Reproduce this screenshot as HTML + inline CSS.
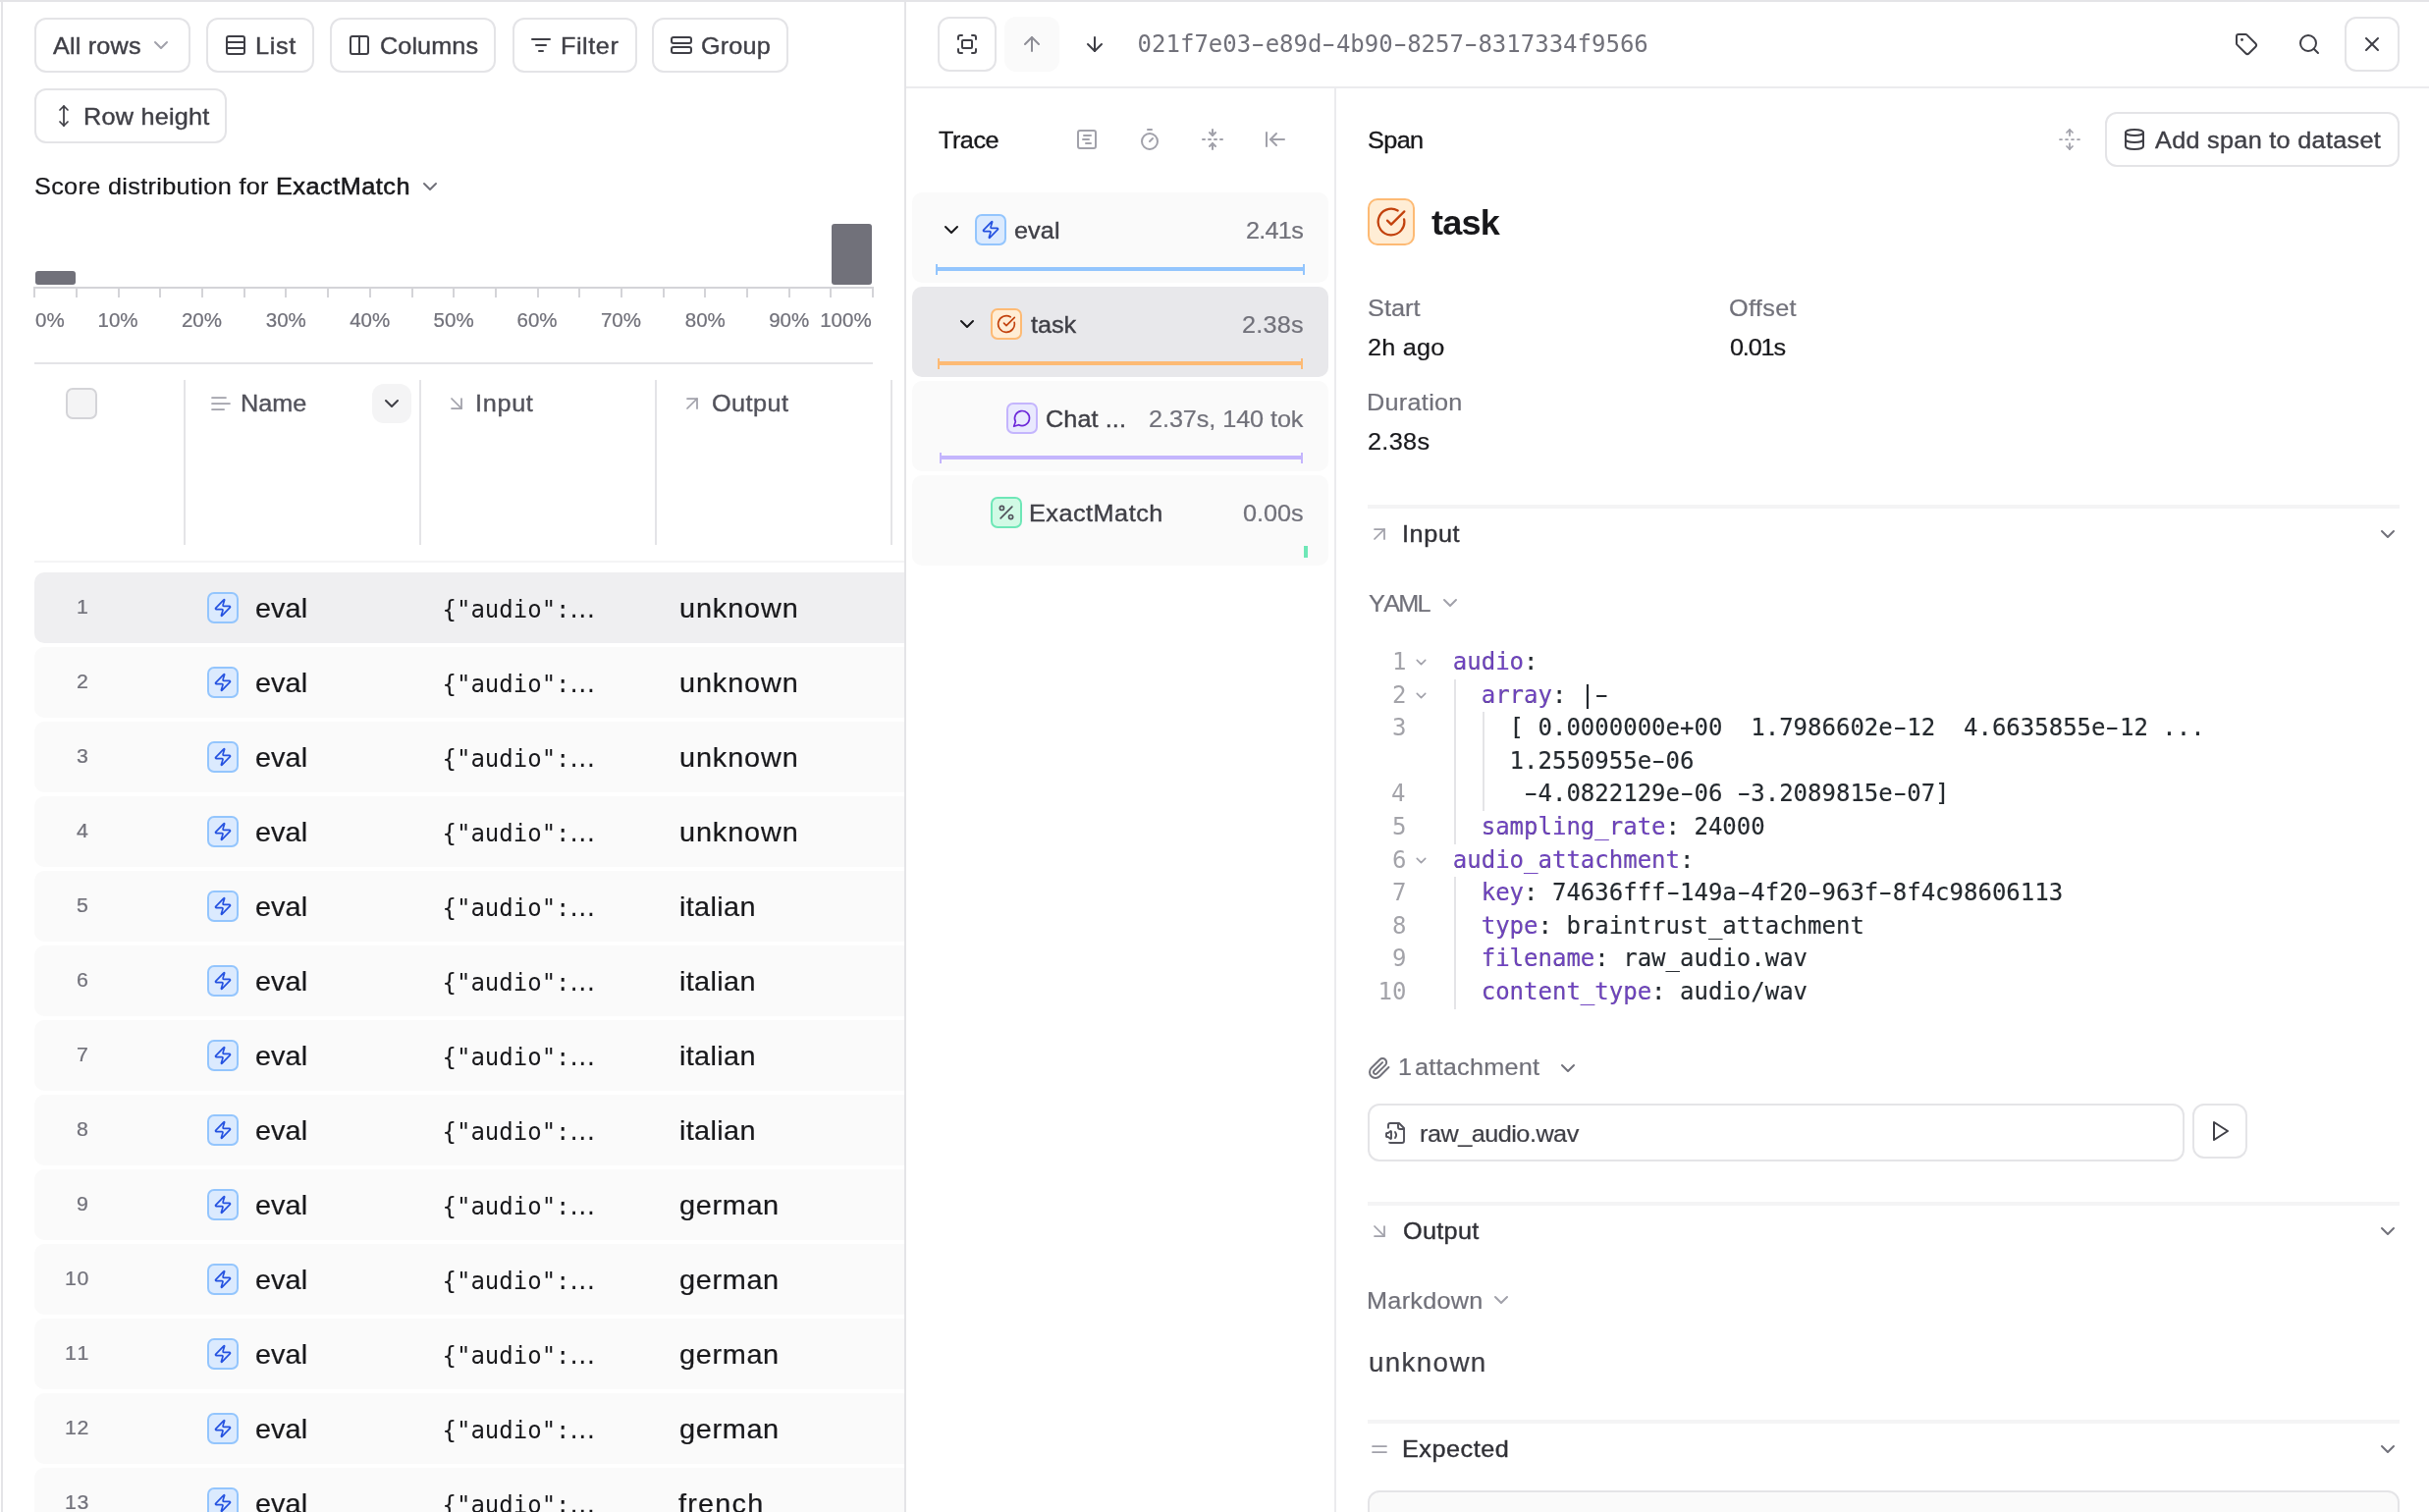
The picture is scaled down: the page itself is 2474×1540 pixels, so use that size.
<!DOCTYPE html>
<html lang="en"><head><meta charset="utf-8"><title>Experiment trace view</title>
<style>
html,body{margin:0;padding:0;background:#fff}
body{width:2474px;height:1540px;position:relative;overflow:hidden;font-family:"Liberation Sans",sans-serif}
#root{will-change:transform;position:absolute;left:0;top:0;width:2474px;height:1540px;overflow:hidden;background:#fff}
#root>div,#root>svg{position:absolute;box-sizing:border-box}
.t{white-space:pre;font-kerning:normal;transform-origin:0 0}
.hy{display:inline-block;transform:scaleX(1.65)}
</style></head>
<body><div id="root">
<div style="left:0px;top:0px;width:2474px;height:2px;background:#e4e4e7"></div>
<div style="left:1px;top:2px;width:2px;height:1540px;background:#e4e4e7"></div>
<div style="left:921px;top:2px;width:2px;height:1540px;background:#e4e4e7"></div>
<div style="left:923px;top:88px;width:1551px;height:2px;background:#ebebee"></div>
<div style="left:1359px;top:90px;width:2px;height:1540px;background:#ebebee"></div>
<div style="left:35px;top:18px;width:159px;height:56px;border:2px solid #e4e4e7;border-radius:12px;background:#fff;"></div>
<div class="t" style="left:54.20px;top:31.00px;line-height:32px;font-family:'Liberation Sans', sans-serif;font-size:24.5px;font-weight:400;color:#3f3f46;letter-spacing:0.170px;-webkit-text-stroke:0.39px #3f3f46;transform:scaleX(1.03);">All rows</div>
<svg style="left:152.0px;top:34.0px;" width="24" height="24" viewBox="0 0 24 24" fill="none" stroke="#a1a1aa" stroke-width="2" stroke-linecap="round" stroke-linejoin="round" color="#a1a1aa"><path d="m6 9 6 6 6-6"/></svg>
<div style="left:210px;top:18px;width:110px;height:56px;border:2px solid #e4e4e7;border-radius:12px;background:#fff;"></div>
<svg style="left:228.0px;top:34.0px;" width="24" height="24" viewBox="0 0 24 24" fill="none" stroke="#3f3f46" stroke-width="2" stroke-linecap="round" stroke-linejoin="round" color="#3f3f46"><rect x="3" y="3" width="18" height="18" rx="2"/><path d="M21 9H3"/><path d="M21 15H3"/></svg>
<div class="t" style="left:260.24px;top:31.00px;line-height:32px;font-family:'Liberation Sans', sans-serif;font-size:24.5px;font-weight:400;color:#3f3f46;letter-spacing:0.612px;-webkit-text-stroke:0.39px #3f3f46;transform:scaleX(1.03);">List</div>
<div style="left:336px;top:18px;width:169px;height:56px;border:2px solid #e4e4e7;border-radius:12px;background:#fff;"></div>
<svg style="left:354.0px;top:34.0px;" width="24" height="24" viewBox="0 0 24 24" fill="none" stroke="#3f3f46" stroke-width="2" stroke-linecap="round" stroke-linejoin="round" color="#3f3f46"><rect x="3" y="3" width="18" height="18" rx="2"/><path d="M12 3v18"/></svg>
<div class="t" style="left:386.57px;top:31.00px;line-height:32px;font-family:'Liberation Sans', sans-serif;font-size:24.5px;font-weight:400;color:#3f3f46;letter-spacing:0.083px;-webkit-text-stroke:0.39px #3f3f46;transform:scaleX(1.03);">Columns</div>
<div style="left:522px;top:18px;width:127px;height:56px;border:2px solid #e4e4e7;border-radius:12px;background:#fff;"></div>
<svg style="left:539.0px;top:34.0px;" width="24" height="24" viewBox="0 0 24 24" fill="none" stroke="#3f3f46" stroke-width="2" stroke-linecap="round" stroke-linejoin="round" color="#3f3f46"><path d="M3 6h18"/><path d="M7 12h10"/><path d="M10 18h4"/></svg>
<div class="t" style="left:571.34px;top:31.00px;line-height:32px;font-family:'Liberation Sans', sans-serif;font-size:24.5px;font-weight:400;color:#3f3f46;letter-spacing:0.533px;-webkit-text-stroke:0.39px #3f3f46;transform:scaleX(1.03);">Filter</div>
<div style="left:664px;top:18px;width:138.5px;height:56px;border:2px solid #e4e4e7;border-radius:12px;background:#fff;"></div>
<svg style="left:682.0px;top:34.0px;" width="24" height="24" viewBox="0 0 24 24" fill="none" stroke="#3f3f46" stroke-width="2" stroke-linecap="round" stroke-linejoin="round" color="#3f3f46"><rect x="2" y="4" width="20" height="6" rx="2"/><rect x="2" y="14" width="20" height="6" rx="2"/></svg>
<div class="t" style="left:714.37px;top:31.00px;line-height:32px;font-family:'Liberation Sans', sans-serif;font-size:24.5px;font-weight:400;color:#3f3f46;letter-spacing:0.131px;-webkit-text-stroke:0.39px #3f3f46;transform:scaleX(1.03);">Group</div>
<div style="left:35px;top:90px;width:196px;height:56px;border:2px solid #e4e4e7;border-radius:12px;background:#fff;"></div>
<svg style="left:53.0px;top:106.0px;" width="24" height="24" viewBox="0 0 24 24" fill="none" stroke="#3f3f46" stroke-width="1.75" stroke-linecap="round" stroke-linejoin="round" color="#3f3f46"><path d="M12 2v20"/><path d="m8 18 4 4 4-4"/><path d="m8 6 4-4 4 4"/></svg>
<div class="t" style="left:84.54px;top:103.00px;line-height:32px;font-family:'Liberation Sans', sans-serif;font-size:24.5px;font-weight:400;color:#3f3f46;letter-spacing:0.217px;-webkit-text-stroke:0.39px #3f3f46;transform:scaleX(1.03);">Row height</div>
<div class="t" style="left:34.77px;top:173.80px;line-height:32px;font-family:'Liberation Sans', sans-serif;font-size:24.5px;font-weight:400;color:#18181b;letter-spacing:0.327px;-webkit-text-stroke:0.22px #18181b;transform:scaleX(1.03);">Score distribution for</div>
<div class="t" style="left:281.34px;top:173.80px;line-height:32px;font-family:'Liberation Sans', sans-serif;font-size:24.5px;font-weight:400;color:#18181b;letter-spacing:0.504px;-webkit-text-stroke:0.55px #18181b;transform:scaleX(1.03);">ExactMatch</div>
<svg style="left:426.0px;top:177.5px;" width="24" height="24" viewBox="0 0 24 24" fill="none" stroke="#71717a" stroke-width="2" stroke-linecap="round" stroke-linejoin="round" color="#71717a"><path d="m6 9 6 6 6-6"/></svg>
<div style="left:36px;top:276px;width:41px;height:14px;background:#71717a;border-radius:3px"></div>
<div style="left:847px;top:228px;width:41px;height:62px;background:#71717a;border-radius:3px"></div>
<div style="left:34.3px;top:292px;width:855.7px;height:2px;background:#d4d4d8"></div>
<div style="left:34.3px;top:293px;width:2px;height:10px;background:#d4d4d8"></div>
<div style="left:76.99px;top:293px;width:2px;height:10px;background:#d4d4d8"></div>
<div style="left:119.68px;top:293px;width:2px;height:10px;background:#d4d4d8"></div>
<div style="left:162.37px;top:293px;width:2px;height:10px;background:#d4d4d8"></div>
<div style="left:205.06px;top:293px;width:2px;height:10px;background:#d4d4d8"></div>
<div style="left:247.75px;top:293px;width:2px;height:10px;background:#d4d4d8"></div>
<div style="left:290.44px;top:293px;width:2px;height:10px;background:#d4d4d8"></div>
<div style="left:333.13px;top:293px;width:2px;height:10px;background:#d4d4d8"></div>
<div style="left:375.82px;top:293px;width:2px;height:10px;background:#d4d4d8"></div>
<div style="left:418.51px;top:293px;width:2px;height:10px;background:#d4d4d8"></div>
<div style="left:461.2px;top:293px;width:2px;height:10px;background:#d4d4d8"></div>
<div style="left:503.89px;top:293px;width:2px;height:10px;background:#d4d4d8"></div>
<div style="left:546.58px;top:293px;width:2px;height:10px;background:#d4d4d8"></div>
<div style="left:589.27px;top:293px;width:2px;height:10px;background:#d4d4d8"></div>
<div style="left:631.96px;top:293px;width:2px;height:10px;background:#d4d4d8"></div>
<div style="left:674.65px;top:293px;width:2px;height:10px;background:#d4d4d8"></div>
<div style="left:717.34px;top:293px;width:2px;height:10px;background:#d4d4d8"></div>
<div style="left:760.03px;top:293px;width:2px;height:10px;background:#d4d4d8"></div>
<div style="left:802.72px;top:293px;width:2px;height:10px;background:#d4d4d8"></div>
<div style="left:845.41px;top:293px;width:2px;height:10px;background:#d4d4d8"></div>
<div style="left:888.1px;top:293px;width:2px;height:10px;background:#d4d4d8"></div>
<div class="t" style="left:36.00px;top:312.00px;line-height:27px;font-family:'Liberation Sans', sans-serif;font-size:20.5px;font-weight:400;color:#71717a;-webkit-text-stroke:0.22px #71717a;">0%</div>
<div class="t" style="left:99.50px;top:312.00px;line-height:27px;font-family:'Liberation Sans', sans-serif;font-size:20.5px;font-weight:400;color:#71717a;-webkit-text-stroke:0.22px #71717a;">10%</div>
<div class="t" style="left:184.90px;top:312.00px;line-height:27px;font-family:'Liberation Sans', sans-serif;font-size:20.5px;font-weight:400;color:#71717a;-webkit-text-stroke:0.22px #71717a;">20%</div>
<div class="t" style="left:270.80px;top:312.00px;line-height:27px;font-family:'Liberation Sans', sans-serif;font-size:20.5px;font-weight:400;color:#71717a;-webkit-text-stroke:0.22px #71717a;">30%</div>
<div class="t" style="left:356.20px;top:312.00px;line-height:27px;font-family:'Liberation Sans', sans-serif;font-size:20.5px;font-weight:400;color:#71717a;-webkit-text-stroke:0.22px #71717a;">40%</div>
<div class="t" style="left:441.60px;top:312.00px;line-height:27px;font-family:'Liberation Sans', sans-serif;font-size:20.5px;font-weight:400;color:#71717a;-webkit-text-stroke:0.22px #71717a;">50%</div>
<div class="t" style="left:526.50px;top:312.00px;line-height:27px;font-family:'Liberation Sans', sans-serif;font-size:20.5px;font-weight:400;color:#71717a;-webkit-text-stroke:0.22px #71717a;">60%</div>
<div class="t" style="left:611.90px;top:312.00px;line-height:27px;font-family:'Liberation Sans', sans-serif;font-size:20.5px;font-weight:400;color:#71717a;-webkit-text-stroke:0.22px #71717a;">70%</div>
<div class="t" style="left:697.80px;top:312.00px;line-height:27px;font-family:'Liberation Sans', sans-serif;font-size:20.5px;font-weight:400;color:#71717a;-webkit-text-stroke:0.22px #71717a;">80%</div>
<div class="t" style="left:783.20px;top:312.00px;line-height:27px;font-family:'Liberation Sans', sans-serif;font-size:20.5px;font-weight:400;color:#71717a;-webkit-text-stroke:0.22px #71717a;">90%</div>
<div class="t" style="left:835.20px;top:312.00px;line-height:27px;font-family:'Liberation Sans', sans-serif;font-size:20.5px;font-weight:400;color:#71717a;-webkit-text-stroke:0.22px #71717a;">100%</div>
<div style="left:35px;top:369px;width:854px;height:2px;background:#e4e4e7"></div>
<div style="left:187px;top:387px;width:2px;height:168px;background:#e4e4e7"></div>
<div style="left:427px;top:387px;width:2px;height:168px;background:#e4e4e7"></div>
<div style="left:667px;top:387px;width:2px;height:168px;background:#e4e4e7"></div>
<div style="left:907px;top:387px;width:2px;height:168px;background:#e4e4e7"></div>
<div style="left:67px;top:395px;width:32px;height:32px;border:2px solid #d4d4d8;border-radius:7px;background:#f4f4f5"></div>
<svg style="left:213.0px;top:399.0px;" width="24" height="24" viewBox="0 0 24 24" fill="none" stroke="#a1a1aa" stroke-width="1.75" stroke-linecap="round" stroke-linejoin="round" color="#a1a1aa"><path d="M17 6.1H3"/><path d="M21 12.1H3"/><path d="M15.1 18H3"/></svg>
<div class="t" style="left:245.04px;top:395.00px;line-height:32px;font-family:'Liberation Sans', sans-serif;font-size:24.5px;font-weight:400;color:#52525b;letter-spacing:-0.035px;-webkit-text-stroke:0.39px #52525b;transform:scaleX(1.03);">Name</div>
<div style="left:379px;top:391px;width:40px;height:40px;background:#f4f4f5;border-radius:12px"></div>
<svg style="left:387.0px;top:399.0px;" width="24" height="24" viewBox="0 0 24 24" fill="none" stroke="#3f3f46" stroke-width="2" stroke-linecap="round" stroke-linejoin="round" color="#3f3f46"><path d="m6 9 6 6 6-6"/></svg>
<svg style="left:453.0px;top:399.0px;" width="24" height="24" viewBox="0 0 24 24" fill="none" stroke="#a1a1aa" stroke-width="1.75" stroke-linecap="round" stroke-linejoin="round" color="#a1a1aa"><path d="m7 7 10 10"/><path d="M17 7v10H7"/></svg>
<div class="t" style="left:484.14px;top:395.00px;line-height:32px;font-family:'Liberation Sans', sans-serif;font-size:24.5px;font-weight:400;color:#52525b;letter-spacing:0.664px;-webkit-text-stroke:0.39px #52525b;transform:scaleX(1.03);">Input</div>
<svg style="left:693.0px;top:399.0px;" width="24" height="24" viewBox="0 0 24 24" fill="none" stroke="#a1a1aa" stroke-width="1.75" stroke-linecap="round" stroke-linejoin="round" color="#a1a1aa"><path d="M7 7h10v10"/><path d="M7 17 17 7"/></svg>
<div class="t" style="left:724.87px;top:395.00px;line-height:32px;font-family:'Liberation Sans', sans-serif;font-size:24.5px;font-weight:400;color:#52525b;letter-spacing:0.462px;-webkit-text-stroke:0.39px #52525b;transform:scaleX(1.03);">Output</div>
<div style="left:35px;top:571px;width:886px;height:2px;background:#f4f4f5"></div>
<div style="left:35px;top:583px;width:886px;height:72px;background:#efeff1;border-radius:10px 0 0 10px"></div>
<div class="t" style="left:78.16px;top:604.00px;line-height:27px;font-family:'Liberation Sans', sans-serif;font-size:20.5px;font-weight:400;color:#71717a;-webkit-text-stroke:0.22px #71717a;transform:scaleX(1.04);">1</div>
<div style="left:211px;top:603px;width:32px;height:32px;border:2px solid #93c5fd;border-radius:7px;background:#dbeafe"></div>
<svg style="left:217.0px;top:609.0px;" width="20" height="20" viewBox="0 0 24 24" fill="none" stroke="#2451e0" stroke-width="2" stroke-linecap="round" stroke-linejoin="round" color="#2451e0"><path d="M4 14a1 1 0 0 1-.78-1.63l9.9-10.2a.5.5 0 0 1 .86.46l-1.92 6.02A1 1 0 0 0 13 10h7a1 1 0 0 1 .78 1.63l-9.9 10.2a.5.5 0 0 1-.86-.46l1.92-6.02A1 1 0 0 0 11 14z"/></svg>
<div class="t" style="left:259.57px;top:602.00px;line-height:36px;font-family:'Liberation Sans', sans-serif;font-size:28.0px;font-weight:400;color:#18181b;letter-spacing:0.059px;-webkit-text-stroke:0.22px #18181b;transform:scaleX(1.03);">eval</div>
<div class="t" style="left:450.50px;top:606.00px;line-height:31px;font-family:'DejaVu Sans Mono', 'Liberation Mono', monospace;font-size:24px;font-weight:400;color:#18181b;">{&quot;audio&quot;:</div>
<div class="t" style="left:580.30px;top:603.00px;line-height:34px;font-family:'DejaVu Sans', 'Liberation Sans', sans-serif;font-size:26px;font-weight:400;color:#18181b;">…</div>
<div class="t" style="left:691.87px;top:602.00px;line-height:36px;font-family:'Liberation Sans', sans-serif;font-size:28.0px;font-weight:400;color:#18181b;letter-spacing:0.858px;-webkit-text-stroke:0.22px #18181b;transform:scaleX(1.03);">unknown</div>
<div style="left:35px;top:659px;width:886px;height:72px;background:#fafafa;border-radius:10px 0 0 10px"></div>
<div class="t" style="left:78.16px;top:680.00px;line-height:27px;font-family:'Liberation Sans', sans-serif;font-size:20.5px;font-weight:400;color:#71717a;-webkit-text-stroke:0.22px #71717a;transform:scaleX(1.04);">2</div>
<div style="left:211px;top:679px;width:32px;height:32px;border:2px solid #93c5fd;border-radius:7px;background:#dbeafe"></div>
<svg style="left:217.0px;top:685.0px;" width="20" height="20" viewBox="0 0 24 24" fill="none" stroke="#2451e0" stroke-width="2" stroke-linecap="round" stroke-linejoin="round" color="#2451e0"><path d="M4 14a1 1 0 0 1-.78-1.63l9.9-10.2a.5.5 0 0 1 .86.46l-1.92 6.02A1 1 0 0 0 13 10h7a1 1 0 0 1 .78 1.63l-9.9 10.2a.5.5 0 0 1-.86-.46l1.92-6.02A1 1 0 0 0 11 14z"/></svg>
<div class="t" style="left:259.57px;top:678.00px;line-height:36px;font-family:'Liberation Sans', sans-serif;font-size:28.0px;font-weight:400;color:#18181b;letter-spacing:0.059px;-webkit-text-stroke:0.22px #18181b;transform:scaleX(1.03);">eval</div>
<div class="t" style="left:450.50px;top:682.00px;line-height:31px;font-family:'DejaVu Sans Mono', 'Liberation Mono', monospace;font-size:24px;font-weight:400;color:#18181b;">{&quot;audio&quot;:</div>
<div class="t" style="left:580.30px;top:679.00px;line-height:34px;font-family:'DejaVu Sans', 'Liberation Sans', sans-serif;font-size:26px;font-weight:400;color:#18181b;">…</div>
<div class="t" style="left:691.87px;top:678.00px;line-height:36px;font-family:'Liberation Sans', sans-serif;font-size:28.0px;font-weight:400;color:#18181b;letter-spacing:0.858px;-webkit-text-stroke:0.22px #18181b;transform:scaleX(1.03);">unknown</div>
<div style="left:35px;top:735px;width:886px;height:72px;background:#fafafa;border-radius:10px 0 0 10px"></div>
<div class="t" style="left:78.16px;top:756.00px;line-height:27px;font-family:'Liberation Sans', sans-serif;font-size:20.5px;font-weight:400;color:#71717a;-webkit-text-stroke:0.22px #71717a;transform:scaleX(1.04);">3</div>
<div style="left:211px;top:755px;width:32px;height:32px;border:2px solid #93c5fd;border-radius:7px;background:#dbeafe"></div>
<svg style="left:217.0px;top:761.0px;" width="20" height="20" viewBox="0 0 24 24" fill="none" stroke="#2451e0" stroke-width="2" stroke-linecap="round" stroke-linejoin="round" color="#2451e0"><path d="M4 14a1 1 0 0 1-.78-1.63l9.9-10.2a.5.5 0 0 1 .86.46l-1.92 6.02A1 1 0 0 0 13 10h7a1 1 0 0 1 .78 1.63l-9.9 10.2a.5.5 0 0 1-.86-.46l1.92-6.02A1 1 0 0 0 11 14z"/></svg>
<div class="t" style="left:259.57px;top:754.00px;line-height:36px;font-family:'Liberation Sans', sans-serif;font-size:28.0px;font-weight:400;color:#18181b;letter-spacing:0.059px;-webkit-text-stroke:0.22px #18181b;transform:scaleX(1.03);">eval</div>
<div class="t" style="left:450.50px;top:758.00px;line-height:31px;font-family:'DejaVu Sans Mono', 'Liberation Mono', monospace;font-size:24px;font-weight:400;color:#18181b;">{&quot;audio&quot;:</div>
<div class="t" style="left:580.30px;top:755.00px;line-height:34px;font-family:'DejaVu Sans', 'Liberation Sans', sans-serif;font-size:26px;font-weight:400;color:#18181b;">…</div>
<div class="t" style="left:691.87px;top:754.00px;line-height:36px;font-family:'Liberation Sans', sans-serif;font-size:28.0px;font-weight:400;color:#18181b;letter-spacing:0.858px;-webkit-text-stroke:0.22px #18181b;transform:scaleX(1.03);">unknown</div>
<div style="left:35px;top:811px;width:886px;height:72px;background:#fafafa;border-radius:10px 0 0 10px"></div>
<div class="t" style="left:78.16px;top:832.00px;line-height:27px;font-family:'Liberation Sans', sans-serif;font-size:20.5px;font-weight:400;color:#71717a;-webkit-text-stroke:0.22px #71717a;transform:scaleX(1.04);">4</div>
<div style="left:211px;top:831px;width:32px;height:32px;border:2px solid #93c5fd;border-radius:7px;background:#dbeafe"></div>
<svg style="left:217.0px;top:837.0px;" width="20" height="20" viewBox="0 0 24 24" fill="none" stroke="#2451e0" stroke-width="2" stroke-linecap="round" stroke-linejoin="round" color="#2451e0"><path d="M4 14a1 1 0 0 1-.78-1.63l9.9-10.2a.5.5 0 0 1 .86.46l-1.92 6.02A1 1 0 0 0 13 10h7a1 1 0 0 1 .78 1.63l-9.9 10.2a.5.5 0 0 1-.86-.46l1.92-6.02A1 1 0 0 0 11 14z"/></svg>
<div class="t" style="left:259.57px;top:830.00px;line-height:36px;font-family:'Liberation Sans', sans-serif;font-size:28.0px;font-weight:400;color:#18181b;letter-spacing:0.059px;-webkit-text-stroke:0.22px #18181b;transform:scaleX(1.03);">eval</div>
<div class="t" style="left:450.50px;top:834.00px;line-height:31px;font-family:'DejaVu Sans Mono', 'Liberation Mono', monospace;font-size:24px;font-weight:400;color:#18181b;">{&quot;audio&quot;:</div>
<div class="t" style="left:580.30px;top:831.00px;line-height:34px;font-family:'DejaVu Sans', 'Liberation Sans', sans-serif;font-size:26px;font-weight:400;color:#18181b;">…</div>
<div class="t" style="left:691.87px;top:830.00px;line-height:36px;font-family:'Liberation Sans', sans-serif;font-size:28.0px;font-weight:400;color:#18181b;letter-spacing:0.858px;-webkit-text-stroke:0.22px #18181b;transform:scaleX(1.03);">unknown</div>
<div style="left:35px;top:887px;width:886px;height:72px;background:#fafafa;border-radius:10px 0 0 10px"></div>
<div class="t" style="left:78.16px;top:908.00px;line-height:27px;font-family:'Liberation Sans', sans-serif;font-size:20.5px;font-weight:400;color:#71717a;-webkit-text-stroke:0.22px #71717a;transform:scaleX(1.04);">5</div>
<div style="left:211px;top:907px;width:32px;height:32px;border:2px solid #93c5fd;border-radius:7px;background:#dbeafe"></div>
<svg style="left:217.0px;top:913.0px;" width="20" height="20" viewBox="0 0 24 24" fill="none" stroke="#2451e0" stroke-width="2" stroke-linecap="round" stroke-linejoin="round" color="#2451e0"><path d="M4 14a1 1 0 0 1-.78-1.63l9.9-10.2a.5.5 0 0 1 .86.46l-1.92 6.02A1 1 0 0 0 13 10h7a1 1 0 0 1 .78 1.63l-9.9 10.2a.5.5 0 0 1-.86-.46l1.92-6.02A1 1 0 0 0 11 14z"/></svg>
<div class="t" style="left:259.57px;top:906.00px;line-height:36px;font-family:'Liberation Sans', sans-serif;font-size:28.0px;font-weight:400;color:#18181b;letter-spacing:0.059px;-webkit-text-stroke:0.22px #18181b;transform:scaleX(1.03);">eval</div>
<div class="t" style="left:450.50px;top:910.00px;line-height:31px;font-family:'DejaVu Sans Mono', 'Liberation Mono', monospace;font-size:24px;font-weight:400;color:#18181b;">{&quot;audio&quot;:</div>
<div class="t" style="left:580.30px;top:907.00px;line-height:34px;font-family:'DejaVu Sans', 'Liberation Sans', sans-serif;font-size:26px;font-weight:400;color:#18181b;">…</div>
<div class="t" style="left:691.87px;top:906.00px;line-height:36px;font-family:'Liberation Sans', sans-serif;font-size:28.0px;font-weight:400;color:#18181b;letter-spacing:0.339px;-webkit-text-stroke:0.22px #18181b;transform:scaleX(1.03);">italian</div>
<div style="left:35px;top:963px;width:886px;height:72px;background:#fafafa;border-radius:10px 0 0 10px"></div>
<div class="t" style="left:78.16px;top:984.00px;line-height:27px;font-family:'Liberation Sans', sans-serif;font-size:20.5px;font-weight:400;color:#71717a;-webkit-text-stroke:0.22px #71717a;transform:scaleX(1.04);">6</div>
<div style="left:211px;top:983px;width:32px;height:32px;border:2px solid #93c5fd;border-radius:7px;background:#dbeafe"></div>
<svg style="left:217.0px;top:989.0px;" width="20" height="20" viewBox="0 0 24 24" fill="none" stroke="#2451e0" stroke-width="2" stroke-linecap="round" stroke-linejoin="round" color="#2451e0"><path d="M4 14a1 1 0 0 1-.78-1.63l9.9-10.2a.5.5 0 0 1 .86.46l-1.92 6.02A1 1 0 0 0 13 10h7a1 1 0 0 1 .78 1.63l-9.9 10.2a.5.5 0 0 1-.86-.46l1.92-6.02A1 1 0 0 0 11 14z"/></svg>
<div class="t" style="left:259.57px;top:982.00px;line-height:36px;font-family:'Liberation Sans', sans-serif;font-size:28.0px;font-weight:400;color:#18181b;letter-spacing:0.059px;-webkit-text-stroke:0.22px #18181b;transform:scaleX(1.03);">eval</div>
<div class="t" style="left:450.50px;top:986.00px;line-height:31px;font-family:'DejaVu Sans Mono', 'Liberation Mono', monospace;font-size:24px;font-weight:400;color:#18181b;">{&quot;audio&quot;:</div>
<div class="t" style="left:580.30px;top:983.00px;line-height:34px;font-family:'DejaVu Sans', 'Liberation Sans', sans-serif;font-size:26px;font-weight:400;color:#18181b;">…</div>
<div class="t" style="left:691.87px;top:982.00px;line-height:36px;font-family:'Liberation Sans', sans-serif;font-size:28.0px;font-weight:400;color:#18181b;letter-spacing:0.339px;-webkit-text-stroke:0.22px #18181b;transform:scaleX(1.03);">italian</div>
<div style="left:35px;top:1039px;width:886px;height:72px;background:#fafafa;border-radius:10px 0 0 10px"></div>
<div class="t" style="left:78.16px;top:1060.00px;line-height:27px;font-family:'Liberation Sans', sans-serif;font-size:20.5px;font-weight:400;color:#71717a;-webkit-text-stroke:0.22px #71717a;transform:scaleX(1.04);">7</div>
<div style="left:211px;top:1059px;width:32px;height:32px;border:2px solid #93c5fd;border-radius:7px;background:#dbeafe"></div>
<svg style="left:217.0px;top:1065.0px;" width="20" height="20" viewBox="0 0 24 24" fill="none" stroke="#2451e0" stroke-width="2" stroke-linecap="round" stroke-linejoin="round" color="#2451e0"><path d="M4 14a1 1 0 0 1-.78-1.63l9.9-10.2a.5.5 0 0 1 .86.46l-1.92 6.02A1 1 0 0 0 13 10h7a1 1 0 0 1 .78 1.63l-9.9 10.2a.5.5 0 0 1-.86-.46l1.92-6.02A1 1 0 0 0 11 14z"/></svg>
<div class="t" style="left:259.57px;top:1058.00px;line-height:36px;font-family:'Liberation Sans', sans-serif;font-size:28.0px;font-weight:400;color:#18181b;letter-spacing:0.059px;-webkit-text-stroke:0.22px #18181b;transform:scaleX(1.03);">eval</div>
<div class="t" style="left:450.50px;top:1062.00px;line-height:31px;font-family:'DejaVu Sans Mono', 'Liberation Mono', monospace;font-size:24px;font-weight:400;color:#18181b;">{&quot;audio&quot;:</div>
<div class="t" style="left:580.30px;top:1059.00px;line-height:34px;font-family:'DejaVu Sans', 'Liberation Sans', sans-serif;font-size:26px;font-weight:400;color:#18181b;">…</div>
<div class="t" style="left:691.87px;top:1058.00px;line-height:36px;font-family:'Liberation Sans', sans-serif;font-size:28.0px;font-weight:400;color:#18181b;letter-spacing:0.339px;-webkit-text-stroke:0.22px #18181b;transform:scaleX(1.03);">italian</div>
<div style="left:35px;top:1115px;width:886px;height:72px;background:#fafafa;border-radius:10px 0 0 10px"></div>
<div class="t" style="left:78.16px;top:1136.00px;line-height:27px;font-family:'Liberation Sans', sans-serif;font-size:20.5px;font-weight:400;color:#71717a;-webkit-text-stroke:0.22px #71717a;transform:scaleX(1.04);">8</div>
<div style="left:211px;top:1135px;width:32px;height:32px;border:2px solid #93c5fd;border-radius:7px;background:#dbeafe"></div>
<svg style="left:217.0px;top:1141.0px;" width="20" height="20" viewBox="0 0 24 24" fill="none" stroke="#2451e0" stroke-width="2" stroke-linecap="round" stroke-linejoin="round" color="#2451e0"><path d="M4 14a1 1 0 0 1-.78-1.63l9.9-10.2a.5.5 0 0 1 .86.46l-1.92 6.02A1 1 0 0 0 13 10h7a1 1 0 0 1 .78 1.63l-9.9 10.2a.5.5 0 0 1-.86-.46l1.92-6.02A1 1 0 0 0 11 14z"/></svg>
<div class="t" style="left:259.57px;top:1134.00px;line-height:36px;font-family:'Liberation Sans', sans-serif;font-size:28.0px;font-weight:400;color:#18181b;letter-spacing:0.059px;-webkit-text-stroke:0.22px #18181b;transform:scaleX(1.03);">eval</div>
<div class="t" style="left:450.50px;top:1138.00px;line-height:31px;font-family:'DejaVu Sans Mono', 'Liberation Mono', monospace;font-size:24px;font-weight:400;color:#18181b;">{&quot;audio&quot;:</div>
<div class="t" style="left:580.30px;top:1135.00px;line-height:34px;font-family:'DejaVu Sans', 'Liberation Sans', sans-serif;font-size:26px;font-weight:400;color:#18181b;">…</div>
<div class="t" style="left:691.87px;top:1134.00px;line-height:36px;font-family:'Liberation Sans', sans-serif;font-size:28.0px;font-weight:400;color:#18181b;letter-spacing:0.339px;-webkit-text-stroke:0.22px #18181b;transform:scaleX(1.03);">italian</div>
<div style="left:35px;top:1191px;width:886px;height:72px;background:#fafafa;border-radius:10px 0 0 10px"></div>
<div class="t" style="left:78.16px;top:1212.00px;line-height:27px;font-family:'Liberation Sans', sans-serif;font-size:20.5px;font-weight:400;color:#71717a;-webkit-text-stroke:0.22px #71717a;transform:scaleX(1.04);">9</div>
<div style="left:211px;top:1211px;width:32px;height:32px;border:2px solid #93c5fd;border-radius:7px;background:#dbeafe"></div>
<svg style="left:217.0px;top:1217.0px;" width="20" height="20" viewBox="0 0 24 24" fill="none" stroke="#2451e0" stroke-width="2" stroke-linecap="round" stroke-linejoin="round" color="#2451e0"><path d="M4 14a1 1 0 0 1-.78-1.63l9.9-10.2a.5.5 0 0 1 .86.46l-1.92 6.02A1 1 0 0 0 13 10h7a1 1 0 0 1 .78 1.63l-9.9 10.2a.5.5 0 0 1-.86-.46l1.92-6.02A1 1 0 0 0 11 14z"/></svg>
<div class="t" style="left:259.57px;top:1210.00px;line-height:36px;font-family:'Liberation Sans', sans-serif;font-size:28.0px;font-weight:400;color:#18181b;letter-spacing:0.059px;-webkit-text-stroke:0.22px #18181b;transform:scaleX(1.03);">eval</div>
<div class="t" style="left:450.50px;top:1214.00px;line-height:31px;font-family:'DejaVu Sans Mono', 'Liberation Mono', monospace;font-size:24px;font-weight:400;color:#18181b;">{&quot;audio&quot;:</div>
<div class="t" style="left:580.30px;top:1211.00px;line-height:34px;font-family:'DejaVu Sans', 'Liberation Sans', sans-serif;font-size:26px;font-weight:400;color:#18181b;">…</div>
<div class="t" style="left:691.57px;top:1210.00px;line-height:36px;font-family:'Liberation Sans', sans-serif;font-size:28.0px;font-weight:400;color:#18181b;letter-spacing:0.653px;-webkit-text-stroke:0.22px #18181b;transform:scaleX(1.03);">german</div>
<div style="left:35px;top:1267px;width:886px;height:72px;background:#fafafa;border-radius:10px 0 0 10px"></div>
<div class="t" style="left:65.76px;top:1288.00px;line-height:27px;font-family:'Liberation Sans', sans-serif;font-size:20.5px;font-weight:400;color:#71717a;letter-spacing:0.522px;-webkit-text-stroke:0.22px #71717a;transform:scaleX(1.04);">10</div>
<div style="left:211px;top:1287px;width:32px;height:32px;border:2px solid #93c5fd;border-radius:7px;background:#dbeafe"></div>
<svg style="left:217.0px;top:1293.0px;" width="20" height="20" viewBox="0 0 24 24" fill="none" stroke="#2451e0" stroke-width="2" stroke-linecap="round" stroke-linejoin="round" color="#2451e0"><path d="M4 14a1 1 0 0 1-.78-1.63l9.9-10.2a.5.5 0 0 1 .86.46l-1.92 6.02A1 1 0 0 0 13 10h7a1 1 0 0 1 .78 1.63l-9.9 10.2a.5.5 0 0 1-.86-.46l1.92-6.02A1 1 0 0 0 11 14z"/></svg>
<div class="t" style="left:259.57px;top:1286.00px;line-height:36px;font-family:'Liberation Sans', sans-serif;font-size:28.0px;font-weight:400;color:#18181b;letter-spacing:0.059px;-webkit-text-stroke:0.22px #18181b;transform:scaleX(1.03);">eval</div>
<div class="t" style="left:450.50px;top:1290.00px;line-height:31px;font-family:'DejaVu Sans Mono', 'Liberation Mono', monospace;font-size:24px;font-weight:400;color:#18181b;">{&quot;audio&quot;:</div>
<div class="t" style="left:580.30px;top:1287.00px;line-height:34px;font-family:'DejaVu Sans', 'Liberation Sans', sans-serif;font-size:26px;font-weight:400;color:#18181b;">…</div>
<div class="t" style="left:691.57px;top:1286.00px;line-height:36px;font-family:'Liberation Sans', sans-serif;font-size:28.0px;font-weight:400;color:#18181b;letter-spacing:0.653px;-webkit-text-stroke:0.22px #18181b;transform:scaleX(1.03);">german</div>
<div style="left:35px;top:1343px;width:886px;height:72px;background:#fafafa;border-radius:10px 0 0 10px"></div>
<div class="t" style="left:65.76px;top:1364.00px;line-height:27px;font-family:'Liberation Sans', sans-serif;font-size:20.5px;font-weight:400;color:#71717a;letter-spacing:2.043px;-webkit-text-stroke:0.22px #71717a;transform:scaleX(1.04);">11</div>
<div style="left:211px;top:1363px;width:32px;height:32px;border:2px solid #93c5fd;border-radius:7px;background:#dbeafe"></div>
<svg style="left:217.0px;top:1369.0px;" width="20" height="20" viewBox="0 0 24 24" fill="none" stroke="#2451e0" stroke-width="2" stroke-linecap="round" stroke-linejoin="round" color="#2451e0"><path d="M4 14a1 1 0 0 1-.78-1.63l9.9-10.2a.5.5 0 0 1 .86.46l-1.92 6.02A1 1 0 0 0 13 10h7a1 1 0 0 1 .78 1.63l-9.9 10.2a.5.5 0 0 1-.86-.46l1.92-6.02A1 1 0 0 0 11 14z"/></svg>
<div class="t" style="left:259.57px;top:1362.00px;line-height:36px;font-family:'Liberation Sans', sans-serif;font-size:28.0px;font-weight:400;color:#18181b;letter-spacing:0.059px;-webkit-text-stroke:0.22px #18181b;transform:scaleX(1.03);">eval</div>
<div class="t" style="left:450.50px;top:1366.00px;line-height:31px;font-family:'DejaVu Sans Mono', 'Liberation Mono', monospace;font-size:24px;font-weight:400;color:#18181b;">{&quot;audio&quot;:</div>
<div class="t" style="left:580.30px;top:1363.00px;line-height:34px;font-family:'DejaVu Sans', 'Liberation Sans', sans-serif;font-size:26px;font-weight:400;color:#18181b;">…</div>
<div class="t" style="left:691.57px;top:1362.00px;line-height:36px;font-family:'Liberation Sans', sans-serif;font-size:28.0px;font-weight:400;color:#18181b;letter-spacing:0.653px;-webkit-text-stroke:0.22px #18181b;transform:scaleX(1.03);">german</div>
<div style="left:35px;top:1419px;width:886px;height:72px;background:#fafafa;border-radius:10px 0 0 10px"></div>
<div class="t" style="left:65.76px;top:1440.00px;line-height:27px;font-family:'Liberation Sans', sans-serif;font-size:20.5px;font-weight:400;color:#71717a;letter-spacing:0.522px;-webkit-text-stroke:0.22px #71717a;transform:scaleX(1.04);">12</div>
<div style="left:211px;top:1439px;width:32px;height:32px;border:2px solid #93c5fd;border-radius:7px;background:#dbeafe"></div>
<svg style="left:217.0px;top:1445.0px;" width="20" height="20" viewBox="0 0 24 24" fill="none" stroke="#2451e0" stroke-width="2" stroke-linecap="round" stroke-linejoin="round" color="#2451e0"><path d="M4 14a1 1 0 0 1-.78-1.63l9.9-10.2a.5.5 0 0 1 .86.46l-1.92 6.02A1 1 0 0 0 13 10h7a1 1 0 0 1 .78 1.63l-9.9 10.2a.5.5 0 0 1-.86-.46l1.92-6.02A1 1 0 0 0 11 14z"/></svg>
<div class="t" style="left:259.57px;top:1438.00px;line-height:36px;font-family:'Liberation Sans', sans-serif;font-size:28.0px;font-weight:400;color:#18181b;letter-spacing:0.059px;-webkit-text-stroke:0.22px #18181b;transform:scaleX(1.03);">eval</div>
<div class="t" style="left:450.50px;top:1442.00px;line-height:31px;font-family:'DejaVu Sans Mono', 'Liberation Mono', monospace;font-size:24px;font-weight:400;color:#18181b;">{&quot;audio&quot;:</div>
<div class="t" style="left:580.30px;top:1439.00px;line-height:34px;font-family:'DejaVu Sans', 'Liberation Sans', sans-serif;font-size:26px;font-weight:400;color:#18181b;">…</div>
<div class="t" style="left:691.57px;top:1438.00px;line-height:36px;font-family:'Liberation Sans', sans-serif;font-size:28.0px;font-weight:400;color:#18181b;letter-spacing:0.653px;-webkit-text-stroke:0.22px #18181b;transform:scaleX(1.03);">german</div>
<div style="left:35px;top:1495px;width:886px;height:72px;background:#fafafa;border-radius:10px 0 0 10px"></div>
<div class="t" style="left:65.76px;top:1516.00px;line-height:27px;font-family:'Liberation Sans', sans-serif;font-size:20.5px;font-weight:400;color:#71717a;letter-spacing:0.522px;-webkit-text-stroke:0.22px #71717a;transform:scaleX(1.04);">13</div>
<div style="left:211px;top:1515px;width:32px;height:32px;border:2px solid #93c5fd;border-radius:7px;background:#dbeafe"></div>
<svg style="left:217.0px;top:1521.0px;" width="20" height="20" viewBox="0 0 24 24" fill="none" stroke="#2451e0" stroke-width="2" stroke-linecap="round" stroke-linejoin="round" color="#2451e0"><path d="M4 14a1 1 0 0 1-.78-1.63l9.9-10.2a.5.5 0 0 1 .86.46l-1.92 6.02A1 1 0 0 0 13 10h7a1 1 0 0 1 .78 1.63l-9.9 10.2a.5.5 0 0 1-.86-.46l1.92-6.02A1 1 0 0 0 11 14z"/></svg>
<div class="t" style="left:259.57px;top:1514.00px;line-height:36px;font-family:'Liberation Sans', sans-serif;font-size:28.0px;font-weight:400;color:#18181b;letter-spacing:0.059px;-webkit-text-stroke:0.22px #18181b;transform:scaleX(1.03);">eval</div>
<div class="t" style="left:450.50px;top:1518.00px;line-height:31px;font-family:'DejaVu Sans Mono', 'Liberation Mono', monospace;font-size:24px;font-weight:400;color:#18181b;">{&quot;audio&quot;:</div>
<div class="t" style="left:580.30px;top:1515.00px;line-height:34px;font-family:'DejaVu Sans', 'Liberation Sans', sans-serif;font-size:26px;font-weight:400;color:#18181b;">…</div>
<div class="t" style="left:691.30px;top:1514.00px;line-height:36px;font-family:'Liberation Sans', sans-serif;font-size:28.0px;font-weight:400;color:#18181b;letter-spacing:1.178px;-webkit-text-stroke:0.22px #18181b;transform:scaleX(1.03);">french</div>
<div style="left:955px;top:17px;width:60px;height:56px;border:2px solid #e4e4e7;border-radius:12px;background:#fff;"></div>
<svg style="left:973.0px;top:33.0px;" width="24" height="24" viewBox="0 0 24 24" fill="none" stroke="#3f3f46" stroke-width="2" stroke-linecap="round" stroke-linejoin="round" color="#3f3f46"><path d="M3 7V5a2 2 0 0 1 2-2h2"/><path d="M17 3h2a2 2 0 0 1 2 2v2"/><path d="M21 17v2a2 2 0 0 1-2 2h-2"/><path d="M7 21H5a2 2 0 0 1-2-2v-2"/><rect x="7" y="8" width="10" height="8" rx="1"/></svg>
<div style="left:1023px;top:17px;width:56px;height:56px;background:#fafafa;border-radius:12px"></div>
<svg style="left:1039.0px;top:33.0px;" width="24" height="24" viewBox="0 0 24 24" fill="none" stroke="#8e8e96" stroke-width="2" stroke-linecap="round" stroke-linejoin="round" color="#8e8e96"><path d="m5 12 7-7 7 7"/><path d="M12 19V5"/></svg>
<svg style="left:1103.0px;top:33.0px;" width="24" height="24" viewBox="0 0 24 24" fill="none" stroke="#3f3f46" stroke-width="2" stroke-linecap="round" stroke-linejoin="round" color="#3f3f46"><path d="M12 5v14"/><path d="m19 12-7 7-7-7"/></svg>
<div class="t" style="left:1158.60px;top:30.20px;line-height:31px;font-family:'DejaVu Sans Mono', 'Liberation Mono', monospace;font-size:24px;font-weight:400;color:#71717a;">021f7e03<span class="hy">-</span>e89d<span class="hy">-</span>4b90<span class="hy">-</span>8257<span class="hy">-</span>8317334f9566</div>
<svg style="left:2276.0px;top:33.0px;" width="24" height="24" viewBox="0 0 24 24" fill="none" stroke="#3f3f46" stroke-width="2" stroke-linecap="round" stroke-linejoin="round" color="#3f3f46"><path d="M12.586 2.586A2 2 0 0 0 11.172 2H4a2 2 0 0 0-2 2v7.172a2 2 0 0 0 .586 1.414l8.704 8.704a2.426 2.426 0 0 0 3.42 0l6.58-6.58a2.426 2.426 0 0 0 0-3.42z"/><circle cx="7.5" cy="7.5" r="1.4" fill="currentColor" stroke="none"/></svg>
<svg style="left:2340.0px;top:33.0px;" width="24" height="24" viewBox="0 0 24 24" fill="none" stroke="#3f3f46" stroke-width="2" stroke-linecap="round" stroke-linejoin="round" color="#3f3f46"><circle cx="11" cy="11" r="8"/><path d="m21 21-4.3-4.3"/></svg>
<div style="left:2388px;top:17px;width:56px;height:56px;border:2px solid #e4e4e7;border-radius:12px;background:#fff;"></div>
<svg style="left:2404.0px;top:33.0px;" width="24" height="24" viewBox="0 0 24 24" fill="none" stroke="#3f3f46" stroke-width="2" stroke-linecap="round" stroke-linejoin="round" color="#3f3f46"><path d="M18 6 6 18"/><path d="m6 6 12 12"/></svg>
<div class="t" style="left:956.00px;top:127.00px;line-height:32px;font-family:'Liberation Sans', sans-serif;font-size:24.5px;font-weight:400;color:#18181b;letter-spacing:-0.491px;-webkit-text-stroke:0.33px #18181b;transform:scaleX(1.03);">Trace</div>
<svg style="left:1095.0px;top:130.0px;" width="24" height="24" viewBox="0 0 24 24" fill="none" stroke="#a1a1aa" stroke-width="2" stroke-linecap="round" stroke-linejoin="round" color="#a1a1aa"><rect x="3" y="3" width="18" height="18" rx="2"/><path d="M9 8h7"/><path d="M8 12h6"/><path d="M11 16h5"/></svg>
<svg style="left:1159.0px;top:130.0px;" width="24" height="24" viewBox="0 0 24 24" fill="none" stroke="#a1a1aa" stroke-width="2" stroke-linecap="round" stroke-linejoin="round" color="#a1a1aa"><path d="M10 2h4"/><path d="M12 14l3-3"/><circle cx="12" cy="14" r="8"/></svg>
<svg style="left:1223.0px;top:130.0px;" width="24" height="24" viewBox="0 0 24 24" fill="none" stroke="#a1a1aa" stroke-width="2" stroke-linecap="round" stroke-linejoin="round" color="#a1a1aa"><path d="M12 22v-6"/><path d="M12 8V2"/><path d="M4 12H2"/><path d="M10 12H8"/><path d="M16 12h-2"/><path d="M22 12h-2"/><path d="m15 19-3-3-3 3"/><path d="m15 5-3 3-3-3"/></svg>
<svg style="left:1287.0px;top:130.0px;" width="24" height="24" viewBox="0 0 24 24" fill="none" stroke="#a1a1aa" stroke-width="2" stroke-linecap="round" stroke-linejoin="round" color="#a1a1aa"><path d="M3 19V5"/><path d="m13 6-6 6 6 6"/><path d="M7 12h14"/></svg>
<div style="left:929px;top:196px;width:424px;height:92px;background:#fafafa;border-radius:10px"></div>
<svg style="left:957.0px;top:222.0px;" width="24" height="24" viewBox="0 0 24 24" fill="none" stroke="#18181b" stroke-width="2" stroke-linecap="round" stroke-linejoin="round" color="#18181b"><path d="m6 9 6 6 6-6"/></svg>
<div style="left:993px;top:218px;width:32px;height:32px;border:2px solid #93c5fd;border-radius:7px;background:#dbeafe"></div>
<svg style="left:999.0px;top:224.0px;" width="20" height="20" viewBox="0 0 24 24" fill="none" stroke="#2451e0" stroke-width="2" stroke-linecap="round" stroke-linejoin="round" color="#2451e0"><path d="M4 14a1 1 0 0 1-.78-1.63l9.9-10.2a.5.5 0 0 1 .86.46l-1.92 6.02A1 1 0 0 0 13 10h7a1 1 0 0 1 .78 1.63l-9.9 10.2a.5.5 0 0 1-.86-.46l1.92-6.02A1 1 0 0 0 11 14z"/></svg>
<div class="t" style="left:1032.97px;top:219.40px;line-height:32px;font-family:'Liberation Sans', sans-serif;font-size:24.5px;font-weight:400;color:#3f3f46;letter-spacing:0.072px;-webkit-text-stroke:0.39px #3f3f46;transform:scaleX(1.03);">eval</div>
<div class="t" style="left:1269.27px;top:219.40px;line-height:32px;font-family:'Liberation Sans', sans-serif;font-size:24.5px;font-weight:400;color:#71717a;letter-spacing:-0.715px;-webkit-text-stroke:0.22px #71717a;transform:scaleX(1.03);">2.41s</div>
<div style="left:953px;top:272px;width:376px;height:4px;background:#93c5fd"></div>
<div style="left:953px;top:268.5px;width:2px;height:11px;background:#93c5fd"></div>
<div style="left:1327px;top:268.5px;width:2px;height:11px;background:#93c5fd"></div>
<div style="left:929px;top:292px;width:424px;height:92px;background:#e8e8eb;border-radius:10px"></div>
<svg style="left:973.0px;top:318.0px;" width="24" height="24" viewBox="0 0 24 24" fill="none" stroke="#18181b" stroke-width="2" stroke-linecap="round" stroke-linejoin="round" color="#18181b"><path d="m6 9 6 6 6-6"/></svg>
<div style="left:1009px;top:314px;width:32px;height:32px;border:2px solid #fdba74;border-radius:7px;background:#ffedd5"></div>
<svg style="left:1015.0px;top:320.0px;" width="20" height="20" viewBox="0 0 24 24" fill="none" stroke="#c2410c" stroke-width="2" stroke-linecap="round" stroke-linejoin="round" color="#c2410c"><path d="M21.801 10A10 10 0 1 1 17 3.335"/><path d="m9 11 3 3L22 4"/></svg>
<div class="t" style="left:1050.00px;top:315.40px;line-height:32px;font-family:'Liberation Sans', sans-serif;font-size:24.5px;font-weight:400;color:#3f3f46;letter-spacing:-0.017px;-webkit-text-stroke:0.39px #3f3f46;transform:scaleX(1.03);">task</div>
<div class="t" style="left:1265.37px;top:315.40px;line-height:32px;font-family:'Liberation Sans', sans-serif;font-size:24.5px;font-weight:400;color:#71717a;letter-spacing:0.232px;-webkit-text-stroke:0.22px #71717a;transform:scaleX(1.03);">2.38s</div>
<div style="left:955px;top:368px;width:372px;height:4px;background:#fdba74"></div>
<div style="left:955px;top:364.5px;width:2px;height:11px;background:#fdba74"></div>
<div style="left:1325px;top:364.5px;width:2px;height:11px;background:#fdba74"></div>
<div style="left:929px;top:388px;width:424px;height:92px;background:#fafafa;border-radius:10px"></div>
<div style="left:1025px;top:410px;width:32px;height:32px;border:2px solid #c4b5fd;border-radius:7px;background:#e9e9fe"></div>
<svg style="left:1031.0px;top:416.0px;" width="20" height="20" viewBox="0 0 24 24" fill="none" stroke="#6d28d9" stroke-width="2" stroke-linecap="round" stroke-linejoin="round" color="#6d28d9"><path d="M7.9 20A9 9 0 1 0 4 16.1L2 22Z"/></svg>
<div class="t" style="left:1064.97px;top:411.40px;line-height:32px;font-family:'Liberation Sans', sans-serif;font-size:24.5px;font-weight:400;color:#3f3f46;letter-spacing:0.075px;-webkit-text-stroke:0.39px #3f3f46;transform:scaleX(1.03);">Chat ...</div>
<div class="t" style="left:1169.57px;top:411.40px;line-height:32px;font-family:'Liberation Sans', sans-serif;font-size:24.5px;font-weight:400;color:#71717a;letter-spacing:-0.080px;-webkit-text-stroke:0.22px #71717a;transform:scaleX(1.03);">2.37s, 140 tok</div>
<div style="left:957px;top:464px;width:370px;height:4px;background:#c4b5fd"></div>
<div style="left:957px;top:460.5px;width:2px;height:11px;background:#c4b5fd"></div>
<div style="left:1325px;top:460.5px;width:2px;height:11px;background:#c4b5fd"></div>
<div style="left:929px;top:484px;width:424px;height:92px;background:#fafafa;border-radius:10px"></div>
<div style="left:1009px;top:506px;width:32px;height:32px;border:2px solid #6ee7b7;border-radius:7px;background:#d1fae5"></div>
<svg style="left:1015.0px;top:512.0px;" width="20" height="20" viewBox="0 0 24 24" fill="none" stroke="#52525b" stroke-width="2" stroke-linecap="round" stroke-linejoin="round" color="#52525b"><path d="M19 5 5 19"/><circle cx="6.5" cy="6.5" r="2.5"/><circle cx="17.5" cy="17.5" r="2.5"/></svg>
<div class="t" style="left:1047.94px;top:507.40px;line-height:32px;font-family:'Liberation Sans', sans-serif;font-size:24.5px;font-weight:400;color:#3f3f46;letter-spacing:0.483px;-webkit-text-stroke:0.39px #3f3f46;transform:scaleX(1.03);">ExactMatch</div>
<div class="t" style="left:1266.40px;top:507.40px;line-height:32px;font-family:'Liberation Sans', sans-serif;font-size:24.5px;font-weight:400;color:#71717a;letter-spacing:-0.018px;-webkit-text-stroke:0.22px #71717a;transform:scaleX(1.03);">0.00s</div>
<div style="left:1327.5px;top:556px;width:4.5px;height:12px;background:#6ee7b7"></div>
<div class="t" style="left:1392.67px;top:127.00px;line-height:32px;font-family:'Liberation Sans', sans-serif;font-size:24.5px;font-weight:400;color:#18181b;letter-spacing:-0.602px;-webkit-text-stroke:0.33px #18181b;transform:scaleX(1.03);">Span</div>
<svg style="left:2096.0px;top:130.0px;" width="24" height="24" viewBox="0 0 24 24" fill="none" stroke="#a1a1aa" stroke-width="1.75" stroke-linecap="round" stroke-linejoin="round" color="#a1a1aa"><path d="M12 22v-6"/><path d="M12 8V2"/><path d="M4 12H2"/><path d="M10 12H8"/><path d="M16 12h-2"/><path d="M22 12h-2"/><path d="m15 19-3 3-3-3"/><path d="m15 5-3-3-3 3"/></svg>
<div style="left:2144px;top:114px;width:300px;height:56px;border:2px solid #e4e4e7;border-radius:12px;background:#fff;"></div>
<svg style="left:2162.0px;top:130.0px;" width="24" height="24" viewBox="0 0 24 24" fill="none" stroke="#3f3f46" stroke-width="2" stroke-linecap="round" stroke-linejoin="round" color="#3f3f46"><ellipse cx="12" cy="5" rx="9" ry="3"/><path d="M3 5V19A9 3 0 0 0 21 19V5"/><path d="M3 12A9 3 0 0 0 21 12"/></svg>
<div class="t" style="left:2195.40px;top:127.00px;line-height:32px;font-family:'Liberation Sans', sans-serif;font-size:24.5px;font-weight:400;color:#3f3f46;letter-spacing:0.287px;-webkit-text-stroke:0.39px #3f3f46;transform:scaleX(1.03);">Add span to dataset</div>
<div style="left:1393px;top:202px;width:48px;height:48px;border:2px solid #fdba74;border-radius:10px;background:#ffedd5"></div>
<svg style="left:1401.0px;top:210.0px;" width="32" height="32" viewBox="0 0 24 24" fill="none" stroke="#c2410c" stroke-width="1.7" stroke-linecap="round" stroke-linejoin="round" color="#c2410c"><path d="M21.801 10A10 10 0 1 1 17 3.335"/><path d="m9 11 3 3L22 4"/></svg>
<div class="t" style="left:1458.00px;top:203.60px;line-height:46px;font-family:'Liberation Sans', sans-serif;font-size:35.0px;font-weight:700;color:#18181b;letter-spacing:-0.745px;transform:scaleX(1.03);">task</div>
<div class="t" style="left:1392.67px;top:297.80px;line-height:32px;font-family:'Liberation Sans', sans-serif;font-size:24.5px;font-weight:400;color:#71717a;letter-spacing:0.058px;-webkit-text-stroke:0.22px #71717a;transform:scaleX(1.03);">Start</div>
<div class="t" style="left:1392.67px;top:338.00px;line-height:32px;font-family:'Liberation Sans', sans-serif;font-size:24.5px;font-weight:400;color:#18181b;letter-spacing:0.212px;-webkit-text-stroke:0.22px #18181b;transform:scaleX(1.03);">2h ago</div>
<div class="t" style="left:1760.77px;top:297.80px;line-height:32px;font-family:'Liberation Sans', sans-serif;font-size:24.5px;font-weight:400;color:#71717a;letter-spacing:0.325px;-webkit-text-stroke:0.22px #71717a;transform:scaleX(1.03);">Offset</div>
<div class="t" style="left:1761.80px;top:338.00px;line-height:32px;font-family:'Liberation Sans', sans-serif;font-size:24.5px;font-weight:400;color:#18181b;letter-spacing:-1.135px;-webkit-text-stroke:0.22px #18181b;transform:scaleX(1.03);">0.01s</div>
<div class="t" style="left:1391.64px;top:393.70px;line-height:32px;font-family:'Liberation Sans', sans-serif;font-size:24.5px;font-weight:400;color:#71717a;letter-spacing:0.280px;-webkit-text-stroke:0.22px #71717a;transform:scaleX(1.03);">Duration</div>
<div class="t" style="left:1392.67px;top:433.70px;line-height:32px;font-family:'Liberation Sans', sans-serif;font-size:24.5px;font-weight:400;color:#18181b;letter-spacing:0.329px;-webkit-text-stroke:0.22px #18181b;transform:scaleX(1.03);">2.38s</div>
<div style="left:1393px;top:514px;width:1051px;height:4px;background:#f4f4f5"></div>
<svg style="left:1393.0px;top:532.0px;" width="24" height="24" viewBox="0 0 24 24" fill="none" stroke="#a1a1aa" stroke-width="1.75" stroke-linecap="round" stroke-linejoin="round" color="#a1a1aa"><path d="M7 7h10v10"/><path d="M7 17 17 7"/></svg>
<div class="t" style="left:1428.34px;top:527.80px;line-height:32px;font-family:'Liberation Sans', sans-serif;font-size:24.5px;font-weight:400;color:#303036;letter-spacing:0.591px;-webkit-text-stroke:0.39px #303036;transform:scaleX(1.03);">Input</div>
<svg style="left:2420.0px;top:531.8px;" width="24" height="24" viewBox="0 0 24 24" fill="none" stroke="#71717a" stroke-width="2" stroke-linecap="round" stroke-linejoin="round" color="#71717a"><path d="m6 9 6 6 6-6"/></svg>
<div class="t" style="left:1393.70px;top:598.90px;line-height:32px;font-family:'Liberation Sans', sans-serif;font-size:24.5px;font-weight:400;color:#71717a;letter-spacing:-1.642px;-webkit-text-stroke:0.22px #71717a;font-kerning:none;transform:scaleX(1.03);">YAML</div>
<svg style="left:1464.8px;top:602.3px;" width="24" height="24" viewBox="0 0 24 24" fill="none" stroke="#a1a1aa" stroke-width="2" stroke-linecap="round" stroke-linejoin="round" color="#a1a1aa"><path d="m6 9 6 6 6-6"/></svg>
<div style="left:1481px;top:691.6px;width:2px;height:168.0px;background:#e4e4e7"></div>
<div style="left:1509.8px;top:725.2px;width:2px;height:100.80000000000001px;background:#e4e4e7"></div>
<div style="left:1481px;top:893.2px;width:2px;height:134.4px;background:#e4e4e7"></div>
<div class="t" style="left:1418.00px;top:659.00px;line-height:31px;font-family:'DejaVu Sans Mono', 'Liberation Mono', monospace;font-size:24px;font-weight:400;color:#a3a3a9;">1</div>
<svg style="left:1438.8px;top:666.0px;" width="17" height="17" viewBox="0 0 24 24" fill="none" stroke="#a1a1aa" stroke-width="2.2" stroke-linecap="round" stroke-linejoin="round" color="#a1a1aa"><path d="m6 9 6 6 6-6"/></svg>
<div class="t" style="left:1479.80px;top:659.00px;line-height:31px;font-family:'DejaVu Sans Mono', 'Liberation Mono', monospace;font-size:24px;font-weight:400;color:#24292e;-webkit-text-stroke:0.15px #24292e;"><span style="color:#6f42c1">audio</span>:</div>
<div class="t" style="left:1418.00px;top:692.60px;line-height:31px;font-family:'DejaVu Sans Mono', 'Liberation Mono', monospace;font-size:24px;font-weight:400;color:#a3a3a9;">2</div>
<svg style="left:1438.8px;top:699.6px;" width="17" height="17" viewBox="0 0 24 24" fill="none" stroke="#a1a1aa" stroke-width="2.2" stroke-linecap="round" stroke-linejoin="round" color="#a1a1aa"><path d="m6 9 6 6 6-6"/></svg>
<div class="t" style="left:1479.80px;top:692.60px;line-height:31px;font-family:'DejaVu Sans Mono', 'Liberation Mono', monospace;font-size:24px;font-weight:400;color:#24292e;-webkit-text-stroke:0.15px #24292e;">  <span style="color:#6f42c1">array</span>: |<span class="hy">-</span></div>
<div class="t" style="left:1418.00px;top:726.20px;line-height:31px;font-family:'DejaVu Sans Mono', 'Liberation Mono', monospace;font-size:24px;font-weight:400;color:#a3a3a9;">3</div>
<div class="t" style="left:1479.80px;top:726.20px;line-height:31px;font-family:'DejaVu Sans Mono', 'Liberation Mono', monospace;font-size:24px;font-weight:400;color:#24292e;-webkit-text-stroke:0.15px #24292e;">    [ 0.0000000e+00  1.7986602e<span class="hy">-</span>12  4.6635855e<span class="hy">-</span>12 ...</div>
<div class="t" style="left:1479.80px;top:759.80px;line-height:31px;font-family:'DejaVu Sans Mono', 'Liberation Mono', monospace;font-size:24px;font-weight:400;color:#24292e;-webkit-text-stroke:0.15px #24292e;">    1.2550955e<span class="hy">-</span>06</div>
<div class="t" style="left:1417.00px;top:793.40px;line-height:31px;font-family:'DejaVu Sans Mono', 'Liberation Mono', monospace;font-size:24px;font-weight:400;color:#a3a3a9;">4</div>
<div class="t" style="left:1479.80px;top:793.40px;line-height:31px;font-family:'DejaVu Sans Mono', 'Liberation Mono', monospace;font-size:24px;font-weight:400;color:#24292e;-webkit-text-stroke:0.15px #24292e;">     <span class="hy">-</span>4.0822129e<span class="hy">-</span>06 <span class="hy">-</span>3.2089815e<span class="hy">-</span>07]</div>
<div class="t" style="left:1418.00px;top:827.00px;line-height:31px;font-family:'DejaVu Sans Mono', 'Liberation Mono', monospace;font-size:24px;font-weight:400;color:#a3a3a9;">5</div>
<div class="t" style="left:1479.80px;top:827.00px;line-height:31px;font-family:'DejaVu Sans Mono', 'Liberation Mono', monospace;font-size:24px;font-weight:400;color:#24292e;-webkit-text-stroke:0.15px #24292e;">  <span style="color:#6f42c1">sampling_rate</span>: 24000</div>
<div class="t" style="left:1418.00px;top:860.60px;line-height:31px;font-family:'DejaVu Sans Mono', 'Liberation Mono', monospace;font-size:24px;font-weight:400;color:#a3a3a9;">6</div>
<svg style="left:1438.8px;top:867.6px;" width="17" height="17" viewBox="0 0 24 24" fill="none" stroke="#a1a1aa" stroke-width="2.2" stroke-linecap="round" stroke-linejoin="round" color="#a1a1aa"><path d="m6 9 6 6 6-6"/></svg>
<div class="t" style="left:1479.80px;top:860.60px;line-height:31px;font-family:'DejaVu Sans Mono', 'Liberation Mono', monospace;font-size:24px;font-weight:400;color:#24292e;-webkit-text-stroke:0.15px #24292e;"><span style="color:#6f42c1">audio_attachment</span>:</div>
<div class="t" style="left:1418.00px;top:894.20px;line-height:31px;font-family:'DejaVu Sans Mono', 'Liberation Mono', monospace;font-size:24px;font-weight:400;color:#a3a3a9;">7</div>
<div class="t" style="left:1479.80px;top:894.20px;line-height:31px;font-family:'DejaVu Sans Mono', 'Liberation Mono', monospace;font-size:24px;font-weight:400;color:#24292e;-webkit-text-stroke:0.15px #24292e;">  <span style="color:#6f42c1">key</span>: 74636fff<span class="hy">-</span>149a<span class="hy">-</span>4f20<span class="hy">-</span>963f<span class="hy">-</span>8f4c98606113</div>
<div class="t" style="left:1418.00px;top:927.80px;line-height:31px;font-family:'DejaVu Sans Mono', 'Liberation Mono', monospace;font-size:24px;font-weight:400;color:#a3a3a9;">8</div>
<div class="t" style="left:1479.80px;top:927.80px;line-height:31px;font-family:'DejaVu Sans Mono', 'Liberation Mono', monospace;font-size:24px;font-weight:400;color:#24292e;-webkit-text-stroke:0.15px #24292e;">  <span style="color:#6f42c1">type</span>: braintrust_attachment</div>
<div class="t" style="left:1418.00px;top:961.40px;line-height:31px;font-family:'DejaVu Sans Mono', 'Liberation Mono', monospace;font-size:24px;font-weight:400;color:#a3a3a9;">9</div>
<div class="t" style="left:1479.80px;top:961.40px;line-height:31px;font-family:'DejaVu Sans Mono', 'Liberation Mono', monospace;font-size:24px;font-weight:400;color:#24292e;-webkit-text-stroke:0.15px #24292e;">  <span style="color:#6f42c1">filename</span>: raw_audio.wav</div>
<div class="t" style="left:1403.55px;top:995.00px;line-height:31px;font-family:'DejaVu Sans Mono', 'Liberation Mono', monospace;font-size:24px;font-weight:400;color:#a3a3a9;">10</div>
<div class="t" style="left:1479.80px;top:995.00px;line-height:31px;font-family:'DejaVu Sans Mono', 'Liberation Mono', monospace;font-size:24px;font-weight:400;color:#24292e;-webkit-text-stroke:0.15px #24292e;">  <span style="color:#6f42c1">content_type</span>: audio/wav</div>
<svg style="left:1392.8px;top:1076.0px;" width="24" height="24" viewBox="0 0 24 24" fill="none" stroke="#71717a" stroke-width="2" stroke-linecap="round" stroke-linejoin="round" color="#71717a"><path d="m21.44 11.05-9.19 9.19a6 6 0 0 1-8.49-8.49l8.57-8.57A4 4 0 1 1 18 8.84l-8.59 8.57a2 2 0 0 1-2.83-2.83l8.49-8.48"/></svg>
<div class="t" style="left:1424.37px;top:1071.00px;line-height:32px;font-family:'Liberation Sans', sans-serif;font-size:24.5px;font-weight:400;color:#71717a;-webkit-text-stroke:0.22px #71717a;transform:scaleX(1.03);">1 </div>
<div class="t" style="left:1441.47px;top:1071.00px;line-height:32px;font-family:'Liberation Sans', sans-serif;font-size:24.5px;font-weight:400;color:#71717a;letter-spacing:0.236px;-webkit-text-stroke:0.22px #71717a;transform:scaleX(1.03);">attachment</div>
<svg style="left:1584.8px;top:1075.8px;" width="24" height="24" viewBox="0 0 24 24" fill="none" stroke="#71717a" stroke-width="2" stroke-linecap="round" stroke-linejoin="round" color="#71717a"><path d="m6 9 6 6 6-6"/></svg>
<div style="left:1393px;top:1124px;width:831.5px;height:59px;border:2px solid #e4e4e7;border-radius:12px;background:#fff"></div>
<svg style="left:1410.2px;top:1142.0px;" width="24" height="24" viewBox="0 0 24 24" fill="none" stroke="#52525b" stroke-width="1.9" stroke-linecap="round" stroke-linejoin="round" color="#52525b"><path d="M11 11a5 5 0 0 1 0 6"/><path d="M14 2v4a2 2 0 0 0 2 2h4"/><path d="M4 6.765V4a2 2 0 0 1 2-2h9l5 5v13a2 2 0 0 1-2 2H6a2 2 0 0 1-.93-.23"/><path d="M7 10.51a.5.5 0 0 0-.826-.38l-1.893 1.628A1 1 0 0 1 3.63 12H2.5a.5.5 0 0 0-.5.5v3a.5.5 0 0 0 .5.5h1.13a1 1 0 0 1 .652.242l1.893 1.63a.5.5 0 0 0 .826-.38z"/></svg>
<div class="t" style="left:1445.97px;top:1138.50px;line-height:32px;font-family:'Liberation Sans', sans-serif;font-size:24.5px;font-weight:400;color:#3f3f46;letter-spacing:-0.491px;-webkit-text-stroke:0.22px #3f3f46;transform:scaleX(1.03);">raw_audio.wav</div>
<div style="left:2233px;top:1124px;width:56px;height:56px;border:2px solid #e4e4e7;border-radius:12px;background:#fff;"></div>
<svg style="left:2249.0px;top:1140.0px;" width="24" height="24" viewBox="0 0 24 24" fill="none" stroke="#3f3f46" stroke-width="2" stroke-linecap="round" stroke-linejoin="round" color="#3f3f46"><polygon points="6 3 20 12 6 21 6 3"/></svg>
<div style="left:1393px;top:1224px;width:1051px;height:4px;background:#f4f4f5"></div>
<svg style="left:1393.0px;top:1242.0px;" width="24" height="24" viewBox="0 0 24 24" fill="none" stroke="#a1a1aa" stroke-width="1.75" stroke-linecap="round" stroke-linejoin="round" color="#a1a1aa"><path d="m7 7 10 10"/><path d="M17 7v10H7"/></svg>
<div class="t" style="left:1429.37px;top:1237.80px;line-height:32px;font-family:'Liberation Sans', sans-serif;font-size:24.5px;font-weight:400;color:#303036;letter-spacing:0.306px;-webkit-text-stroke:0.39px #303036;transform:scaleX(1.03);">Output</div>
<svg style="left:2420.0px;top:1241.8px;" width="24" height="24" viewBox="0 0 24 24" fill="none" stroke="#71717a" stroke-width="2" stroke-linecap="round" stroke-linejoin="round" color="#71717a"><path d="m6 9 6 6 6-6"/></svg>
<div class="t" style="left:1391.64px;top:1309.00px;line-height:32px;font-family:'Liberation Sans', sans-serif;font-size:24.5px;font-weight:400;color:#71717a;letter-spacing:0.277px;-webkit-text-stroke:0.22px #71717a;transform:scaleX(1.03);">Markdown</div>
<svg style="left:1517.0px;top:1312.3px;" width="24" height="24" viewBox="0 0 24 24" fill="none" stroke="#a1a1aa" stroke-width="2" stroke-linecap="round" stroke-linejoin="round" color="#a1a1aa"><path d="m6 9 6 6 6-6"/></svg>
<div class="t" style="left:1393.57px;top:1370.60px;line-height:35px;font-family:'Liberation Sans', sans-serif;font-size:27.0px;font-weight:400;color:#3f3f46;letter-spacing:1.287px;-webkit-text-stroke:0.22px #3f3f46;transform:scaleX(1.03);">unknown</div>
<div style="left:1393px;top:1446px;width:1051px;height:4px;background:#f4f4f5"></div>
<svg style="left:1393.0px;top:1464.0px;" width="24" height="24" viewBox="0 0 24 24" fill="none" stroke="#a1a1aa" stroke-width="1.75" stroke-linecap="round" stroke-linejoin="round" color="#a1a1aa"><path d="M5 9h14"/><path d="M5 15h14"/></svg>
<div class="t" style="left:1428.34px;top:1459.80px;line-height:32px;font-family:'Liberation Sans', sans-serif;font-size:24.5px;font-weight:400;color:#303036;letter-spacing:0.484px;-webkit-text-stroke:0.39px #303036;transform:scaleX(1.03);">Expected</div>
<svg style="left:2420.0px;top:1463.8px;" width="24" height="24" viewBox="0 0 24 24" fill="none" stroke="#71717a" stroke-width="2" stroke-linecap="round" stroke-linejoin="round" color="#71717a"><path d="m6 9 6 6 6-6"/></svg>
<div style="left:1393px;top:1518px;width:1051px;height:60px;border:2px solid #e4e4e7;border-radius:12px;background:#fafafa"></div>
</div></body></html>
